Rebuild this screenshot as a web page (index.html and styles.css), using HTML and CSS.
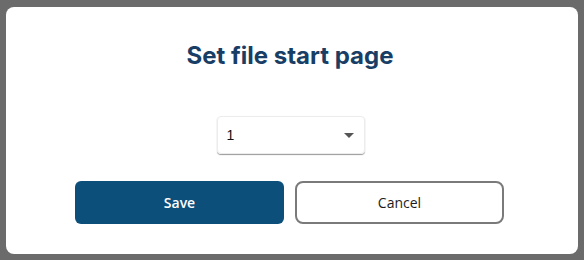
FILE: index.html
```html
<!DOCTYPE html>
<html lang="en">
<head>
    <meta charset="UTF-8">
    <meta name="viewport" content="width=device-width, initial-scale=1.0">
    <title>Set file start page</title>
    <link rel="stylesheet" href="styles.css">
</head>
<body>

    <div class="dialog">
        <h2 class="dialog-title">Set file start page</h2>

        <div class="select-box">
            <span class="select-value">1</span>
            <svg class="select-arrow" width="10" height="5" viewBox="0 0 10 5">
                <path d="M0 0 L10 0 L5 5 Z" fill="#555"/>
            </svg>
        </div>

        <div class="actions">
            <button class="btn btn-save">Save</button>
            <button class="btn btn-cancel">Cancel</button>
        </div>
    </div>

</body>
</html>
```

FILE: styles.css
```css
body {
    margin: 0;
    background-color: #6b6b6b;
    font-family: "Open Sans", Arial, sans-serif;
}

.dialog {
    margin: 7px 0 0 6px;
    width: 572px;
    height: 247px;
    background-color: #fff;
    border-radius: 8px;
    box-sizing: border-box;
    padding-top: 34px;
    display: flex;
    flex-direction: column;
    align-items: center;
}

.dialog-title {
    margin: 0 0 0 -4px;
    font-family: Inter, "Noto Sans", sans-serif;
    font-size: 24px;
    font-weight: 700;
    line-height: 30px;
    color: #183e66;
}

.select-box {
    margin-top: 45px;
    width: 148px;
    height: 38px;
    box-sizing: border-box;
    border: 1px solid #ececec;
    border-radius: 4px;
    box-shadow: 0 1px 1px #9a9a9a;
    display: flex;
    align-items: center;
    justify-content: space-between;
    padding: 0 10px 0 9px;
    margin-left: -3px;
}

.select-value {
    font-family: Arial, "Liberation Sans", sans-serif;
    font-size: 14px;
    color: #111;
}

.actions {
    margin-top: 27px;
    display: flex;
    gap: 11px;
    margin-left: -5px;
}

.btn {
    width: 209px;
    height: 43px;
    font-family: "Open Sans", Arial, sans-serif;
    font-size: 14px;
    cursor: pointer;
}

.btn-save {
    background-color: #0d4f7b;
    color: #fff;
    font-weight: 600;
    border: none;
    border-radius: 6px;
}

.btn-cancel {
    background-color: #fff;
    color: #1c1c1c;
    font-weight: 500;
    border: 2px solid #7a7a7a;
    border-radius: 8px;
}
```
